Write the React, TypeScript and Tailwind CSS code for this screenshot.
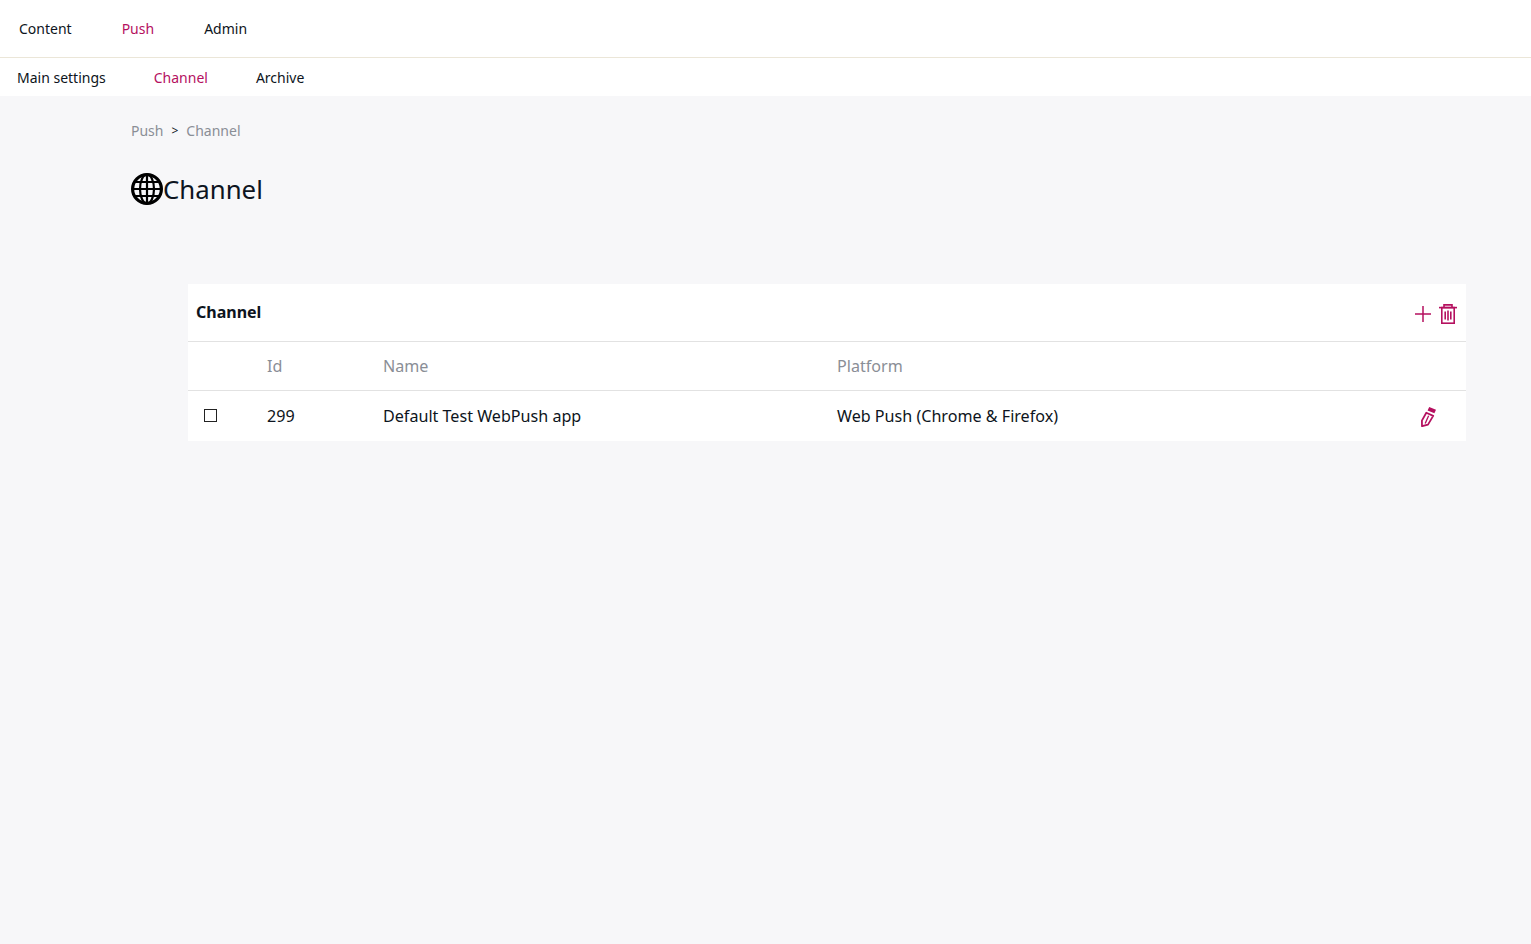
const GlobeIcon = () => (
  <svg width="32" height="32" viewBox="0 0 32 32" fill="none" stroke="#000" className="shrink-0">
    <circle cx="16" cy="16" r="14.4" strokeWidth="3.2" />
    <ellipse cx="16" cy="16" rx="7" ry="14.5" strokeWidth="2.2" />
    <path d="M16 1.5v29M1.5 16h29M4 9h24M4 23h24" strokeWidth="2.2" />
  </svg>
);

const PlusIcon = () => (
  <svg width="16" height="16" viewBox="0 0 16 16" fill="none" stroke="#b5105f" strokeWidth="1.5">
    <path d="M8 0v16M0 8h16" />
  </svg>
);

const TrashIcon = () => (
  <svg width="18" height="20" viewBox="0 0 18 20" fill="none" stroke="#b5105f" strokeWidth="1.6">
    <path d="M0 3.6h18" />
    <path d="M5 3.4V.9h8v2.5" />
    <rect x="2.8" y="3.6" width="12.4" height="15.6" />
    <path d="M6.2 7.5v8M9 6.5v10M11.8 7.5v8" />
  </svg>
);

const PencilIcon = () => (
  <svg width="15" height="20" viewBox="0 0 15 20" fill="none" stroke="#b5105f" strokeWidth="1.8">
    <path d="M5.3 5.8l6.9 3.1L7 17.6 1 19.2l-.1-5.6z" strokeLinejoin="round" />
    <path d="M7.6 8.8L4.2 16.4" strokeWidth="1.3" />
    <path d="M6.6 3.4L8.2 0l6.8 2.8-1.6 3.5z" fill="#b5105f" strokeWidth="0" />
  </svg>
);

export default function App() {
  return (
    <div className="min-h-[944px] bg-[#f7f7f9] font-['Noto_Sans',sans-serif] text-[#0d1420]">
      <nav className="flex h-[58px] items-center gap-[50px] border-b border-[#ebe6d8] bg-white pl-[19px] text-sm">
        <span>Content</span>
        <span className="text-[#b5105f]">Push</span>
        <span>Admin</span>
      </nav>
      <nav className="flex h-[38px] items-center gap-[48px] bg-white pl-[17px] pt-[2px] text-sm">
        <span>Main settings</span>
        <span className="text-[#b5105f]">Channel</span>
        <span>Archive</span>
      </nav>

      <main className="pl-[131px] pr-[65px] pt-[25px]">
        <div className="flex h-[20px] items-center text-sm text-[#8a8e96]">
          <span>Push</span>
          <span className="mx-[8px] text-xs text-[#0d1420]">&gt;</span>
          <span>Channel</span>
        </div>

        <h1 className="mt-[32px] flex h-[32px] items-center text-[25.8px] font-normal">
          <GlobeIcon />
          Channel
        </h1>

        <section className="ml-[57px] mt-[79px] bg-white">
          <div className="flex h-[58px] items-center justify-between border-b border-[#e2e2e2] pl-[8px] pr-[9px]">
            <h2 className="mb-[1px] text-base font-bold">Channel</h2>
            <div className="mt-[3px] flex items-center gap-[8px]">
              <PlusIcon />
              <TrashIcon />
            </div>
          </div>
          <table className="w-full table-fixed border-collapse text-[16.13px]">
            <thead>
              <tr className="h-[48px] border-b border-[#e2e2e2] text-left text-[#8a8e96]">
                <th className="w-[79px] font-normal" />
                <th className="w-[116px] font-normal">Id</th>
                <th className="w-[454px] font-normal">Name</th>
                <th className="font-normal">Platform</th>
                <th className="w-[72px] font-normal" />
              </tr>
            </thead>
            <tbody>
              <tr className="h-[51px]">
                <td className="pl-[16px]">
                  <div className="h-[13px] w-[13px] border border-[#222]" />
                </td>
                <td>299</td>
                <td>Default Test WebPush app</td>
                <td>Web Push (Chrome &amp; Firefox)</td>
                <td className="pl-[27px] pt-[3px]">
                  <PencilIcon />
                </td>
              </tr>
            </tbody>
          </table>
        </section>
      </main>
    </div>
  );
}
